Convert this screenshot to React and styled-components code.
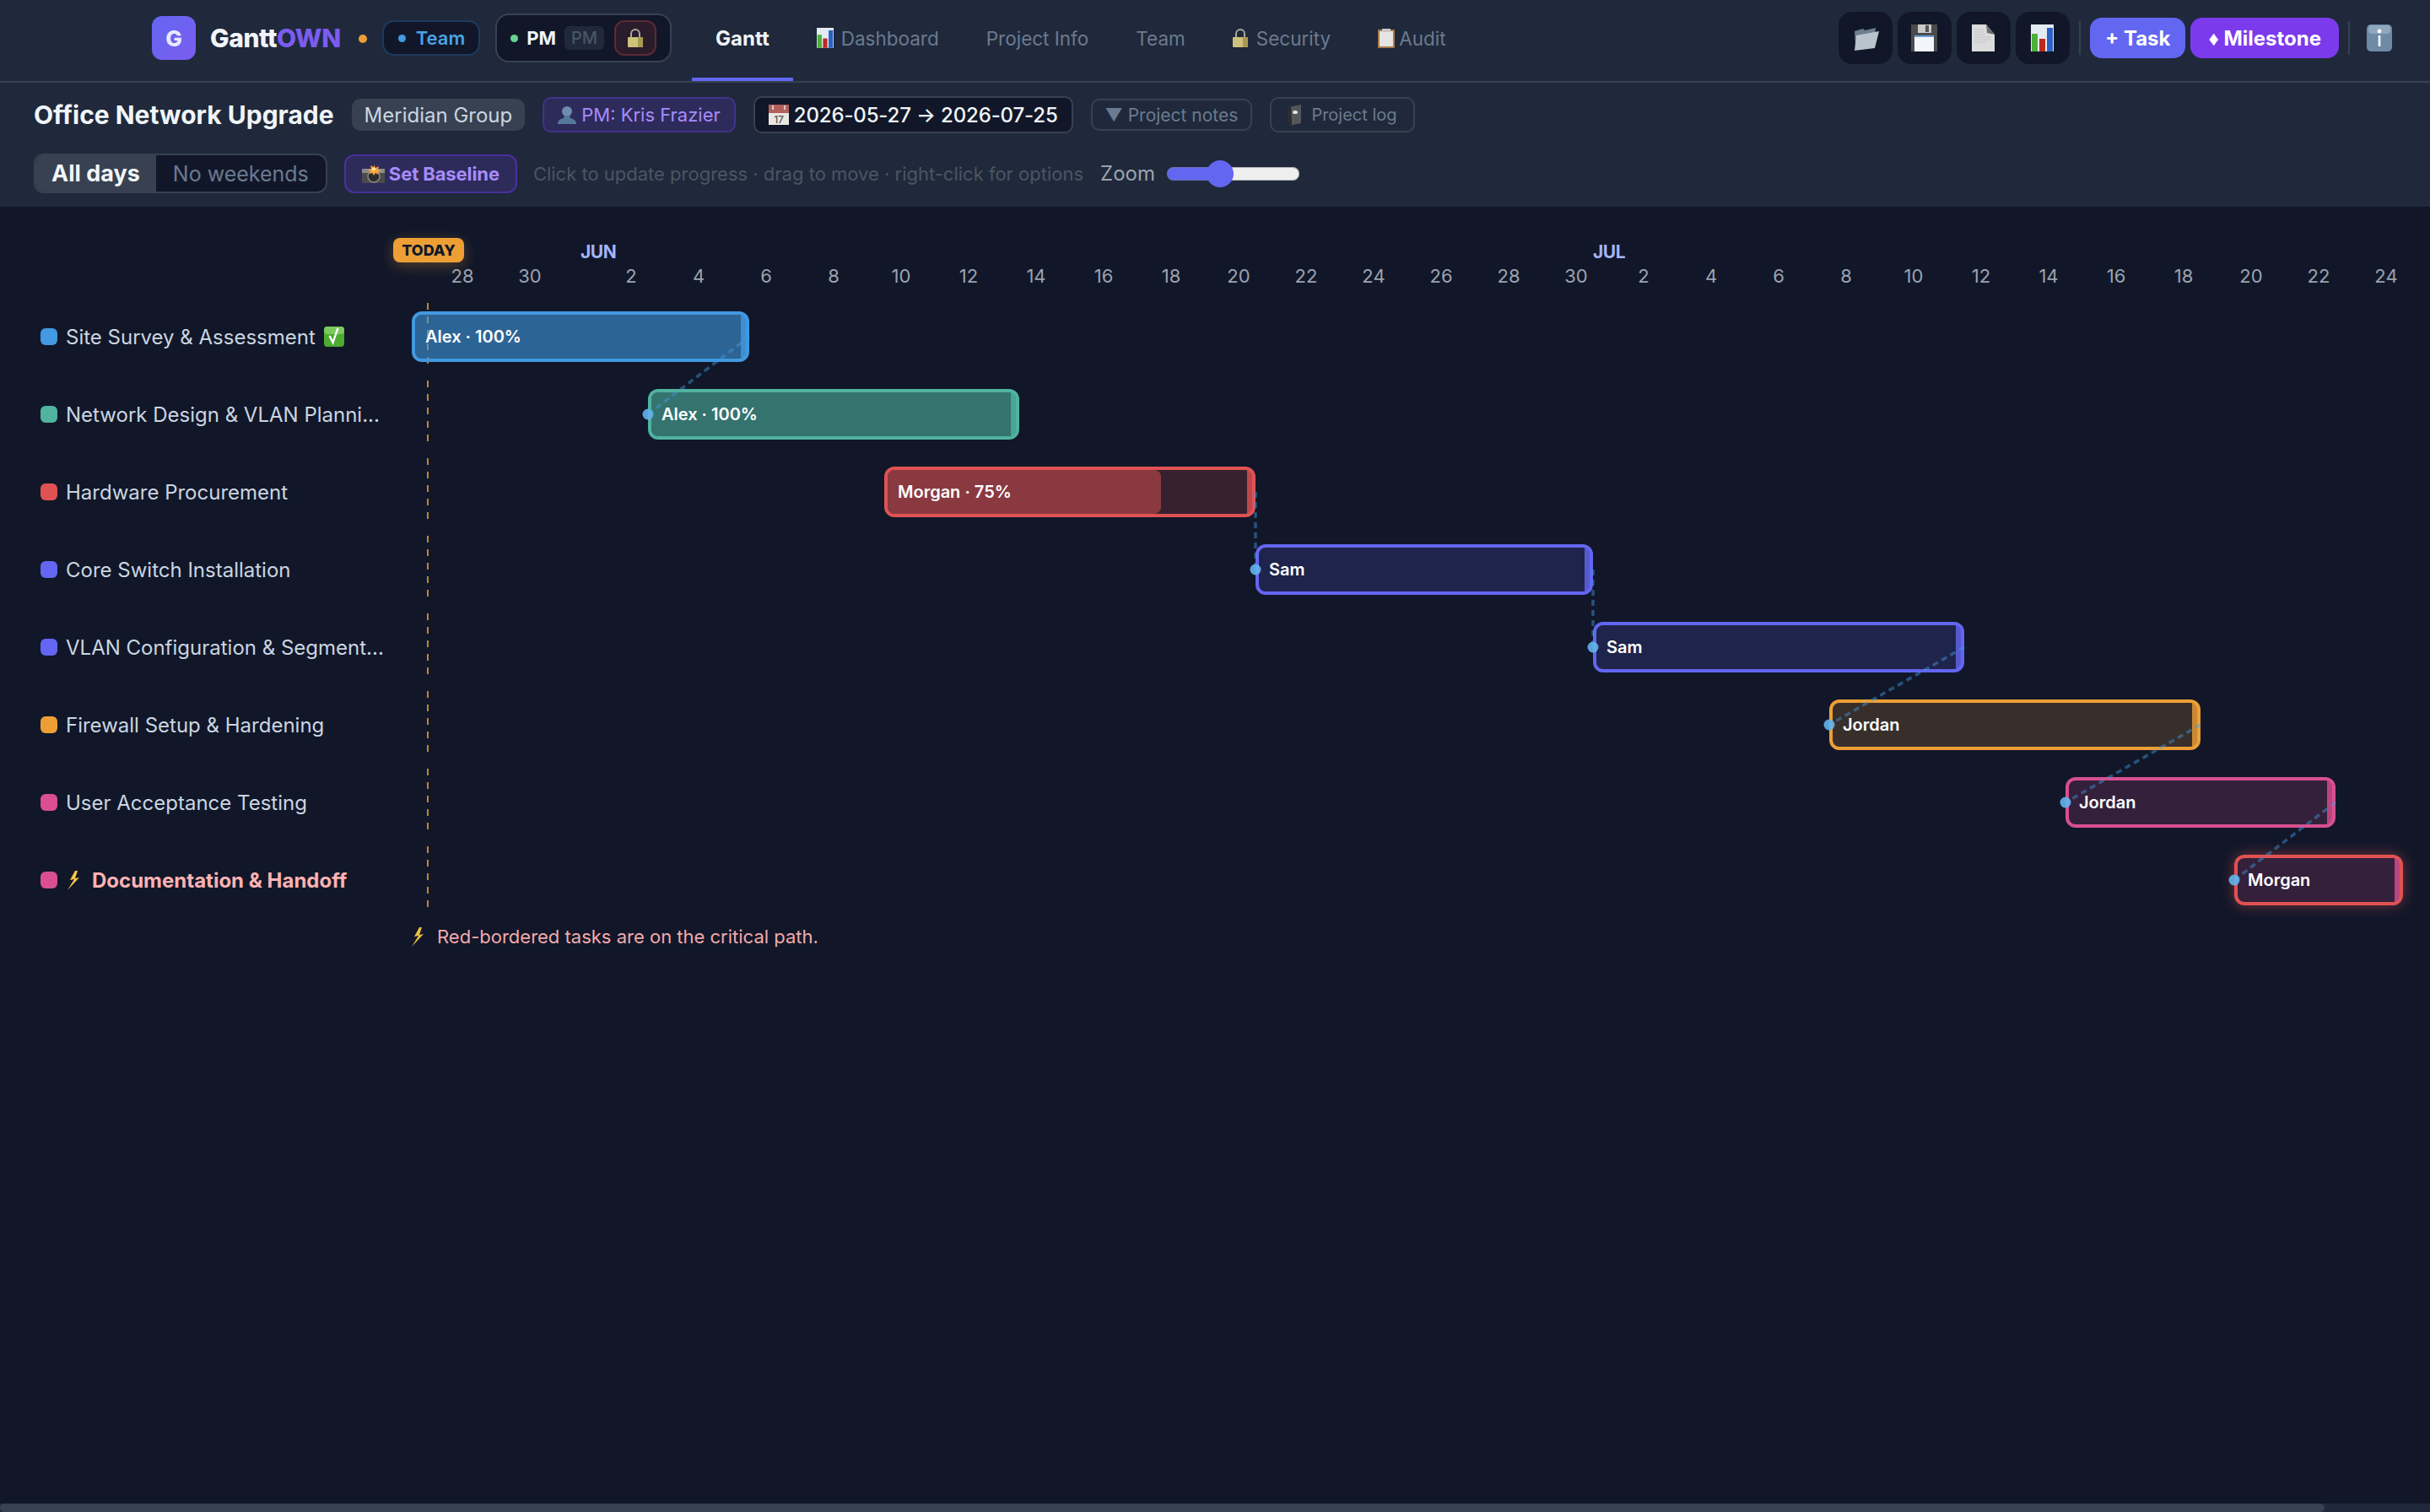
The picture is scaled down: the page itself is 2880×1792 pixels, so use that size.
import React from 'react';
import styled, { createGlobalStyle } from 'styled-components';

const DAY = 40;
const ROW = 92;

const GlobalStyle = createGlobalStyle`
  * { box-sizing: border-box; }
  html, body { margin: 0; height: 100%; background: #111729; }
  body { font-family: Inter, "Noto Sans", sans-serif; color: #f1f5f9; overflow: hidden; }
`;

const Page = styled.div`
  display: flex;
  flex-direction: column;
  height: 100vh;
`;

const TopBar = styled.header`
  display: flex;
  align-items: center;
  height: 98px;
  padding: 0 45px 6px 180px;
  background: #1f293b;
  border-bottom: 2px solid #374151;
`;

const Logo = styled.div`
  display: flex;
  align-items: center;
  justify-content: center;
  width: 52px;
  height: 52px;
  border-radius: 12px;
  background: linear-gradient(135deg, #6366f1, #7c5cf0);
  font-size: 26px;
  font-weight: 800;
  color: #e8eaff;
`;

const Brand = styled.div`
  margin-left: 17px;
  font-size: 30px;
  font-weight: 800;
  letter-spacing: -0.4px;
  color: #f1f5f9;
  span { color: #7c5cf0; }
`;

const SaveDot = styled.span`
  width: 10px;
  height: 10px;
  margin: 2px 18px 0 21px;
  border-radius: 50%;
  background: #ed9f35;
`;

const Dot = styled.span`
  flex: none;
  width: 9px;
  height: 9px;
  border-radius: 50%;
  background: ${p => p.$color};
`;

const TeamPill = styled.div`
  display: flex;
  align-items: center;
  gap: 12px;
  height: 42px;
  padding: 0 16px 0 17px;
  border: 2px solid #1e3a5f;
  border-radius: 14px;
  background: #111729;
  font-size: 22px;
  font-weight: 600;
  color: #4ba3e3;
`;

const RoleBox = styled.div`
  display: flex;
  align-items: center;
  gap: 10px;
  height: 58px;
  margin-left: 18px;
  padding: 0 16px;
  border: 2px solid #374151;
  border-radius: 16px;
  background: #111729;
  font-size: 22px;
  font-weight: 700;
`;

const RoleSwitch = styled.span`
  display: flex;
  align-items: center;
  height: 28px;
  padding: 0 8px;
  border-radius: 6px;
  background: #1f293b;
  font-size: 20px;
  font-weight: 500;
  color: #4b5563;
`;

const LockButton = styled.span`
  display: flex;
  align-items: center;
  justify-content: center;
  width: 50px;
  height: 42px;
  margin-left: 2px;
  border: 2px solid #5c2a36;
  border-radius: 12px;
  background: #2a1c2b;
`;

const Tabs = styled.nav`
  display: flex;
  align-self: stretch;
  margin: 0 0 -6px 24px;
`;

const Tab = styled.div`
  display: flex;
  align-items: center;
  gap: ${p => p.$gap || 0}px;
  height: 96px;
  padding: 0 28px 2px;
  border-bottom: 4px solid ${p => (p.$active ? '#6366f1' : 'transparent')};
  font-size: ${p => (p.$active ? 24 : 22.5)}px;
  font-weight: ${p => (p.$active ? 700 : 400)};
  color: ${p => (p.$active ? '#f1f5f9' : '#6b7a90')};
`;

const Actions = styled.div`
  display: flex;
  align-items: center;
  gap: 6px;
  margin-left: auto;
`;

const IconButton = styled.div`
  display: flex;
  align-items: center;
  justify-content: center;
  width: 64px;
  height: 62px;
  border-radius: 16px;
  background: #111729;
`;

const Divider = styled.span`
  width: 2px;
  height: 40px;
  margin: 0 5px;
  background: #374151;
`;

const ActionButton = styled.div`
  display: flex;
  align-items: center;
  height: 48px;
  padding: 0 ${p => p.$pad}px;
  border-radius: 14px;
  background: ${p => p.$color};
  font-size: 24px;
  font-weight: 700;
  color: #fff;
`;

const InfoSlot = styled.span`
  display: flex;
  margin-left: 9px;
`;

const ProjectBar = styled.section`
  display: flex;
  flex-direction: column;
  gap: 24px;
  height: 147px;
  padding: 16px 40px;
  background: #1f293b;
`;

const BarRow = styled.div`
  display: flex;
  align-items: center;
`;

const ProjectTitle = styled.h1`
  margin: 0 21px 0 0;
  font-size: 30px;
  font-weight: 700;
  color: #f1f5f9;
`;

const Chip = styled.span`
  display: flex;
  align-items: center;
  height: ${p => p.$h || 42}px;
  margin-right: 21px;
  padding: 0 ${p => p.$pad || 16}px;
  border-radius: 10px;
  font-size: ${p => p.$size || 22}px;
  white-space: nowrap;
  gap: ${p => p.$gap || 6}px;
`;

const ClientChip = styled(Chip)`
  background: #374151;
  color: #cbd5e1;
`;

const OwnerChip = styled(Chip)`
  border: 2px solid #43328b;
  background: #2d2b5a;
  color: #a78bfa;
`;

const DateChip = styled(Chip)`
  border: 2px solid #374151;
  background: #111729;
  color: #f1f5f9;
  font-weight: 500;
  letter-spacing: -0.15px;
`;

const GhostChip = styled(Chip)`
  border: 2px solid #374151;
  color: #6b7a90;
`;

const Segments = styled.div`
  display: flex;
  height: 47px;
  border: 2px solid #374151;
  border-radius: 12px;
  overflow: hidden;
  background: #111729;
`;

const Segment = styled.span`
  display: flex;
  align-items: center;
  padding: 0 ${p => (p.$active ? 19 : 20)}px;
  background: ${p => (p.$active ? '#374151' : 'transparent')};
  font-size: ${p => (p.$active ? 27 : 25)}px;
  font-weight: ${p => (p.$active ? 700 : 400)};
  color: ${p => (p.$active ? '#f1f5f9' : '#6b7a90')};
`;

const BaselineButton = styled.div`
  display: flex;
  align-items: center;
  gap: 5px;
  height: 46px;
  margin-left: 20px;
  padding: 0 19px;
  border: 2px solid #4c2f9e;
  border-radius: 12px;
  background: #2d2b5a;
  font-size: 22px;
  font-weight: 700;
  letter-spacing: -0.1px;
  color: #a78bfa;
`;

const Hint = styled.span`
  margin-left: 19px;
  font-size: 22px;
  color: #4b5563;
`;

const ZoomLabel = styled.label`
  margin-left: 20px;
  font-size: 24px;
  color: #9ca3af;
`;

const ZoomRange = styled.input`
  appearance: none;
  width: 157px;
  height: 16px;
  margin: 0 0 0 14px;
  border-radius: 8px;
  background: linear-gradient(to right, #6366f1 41%, #efefef 41%);
  box-shadow: inset 0 0 0 1px rgba(120, 120, 130, 0.5);
  &::-webkit-slider-thumb {
    appearance: none;
    width: 32px;
    height: 32px;
    border-radius: 50%;
    background: #6366f1;
  }
`;

const ChartArea = styled.main`
  flex: 1;
  overflow: hidden;
  background: #111729;
`;

const Chart = styled.div`
  position: relative;
  width: 3010px;
  padding: 40px 0 0 488px;
`;

const ScrollTrack = styled.div`
  flex: none;
  height: 10px;
  background: #1f293b;
`;

const ScrollThumb = styled.div`
  width: 2755px;
  height: 100%;
  border-radius: 5px;
  background: #374151;
`;

const TimeGrid = styled.div`
  display: grid;
  grid-template-columns: repeat(60, ${DAY}px);
  height: ${p => p.$h}px;
  margin-top: ${p => p.$mt || 0}px;
  align-items: center;
`;

const Month = styled.span`
  grid-column: ${p => p.$col + 1} / span 3;
  font-size: 21px;
  font-weight: 700;
  letter-spacing: -0.4px;
  color: #a5b4fc;
`;

const DayCell = styled.span`
  text-align: center;
  font-size: 22px;
  color: #9ca3af;
`;

const TodayBadge = styled.span`
  position: absolute;
  left: 466px;
  top: 37px;
  display: flex;
  align-items: center;
  justify-content: center;
  width: 84px;
  height: 29px;
  border-radius: 8px;
  background: #ed9f35;
  box-shadow: 0 4px 16px rgba(237, 159, 53, 0.3);
  font-size: 18px;
  font-weight: 800;
  color: #111729;
`;

const Rows = styled.div`
  position: relative;
  margin: 15px 0 0 -488px;
`;

const TaskRow = styled.div`
  display: flex;
  height: ${ROW}px;
`;

const TaskLabel = styled.div`
  display: flex;
  align-items: center;
  flex: none;
  width: 488px;
  padding-left: 48px;
  gap: ${p => (p.$critical ? 12 : 10)}px;
  font-size: 24px;
  font-weight: ${p => (p.$critical ? 700 : 400)};
  color: ${p => (p.$critical ? '#feb2b2' : '#cbd5e0')};
  white-space: nowrap;
`;

const Swatch = styled.span`
  flex: none;
  width: 20px;
  height: 20px;
  border-radius: 6px;
  background: ${p => p.$color};
`;

const Lane = styled.div`
  position: relative;
  flex: none;
  width: ${DAY * 60}px;
`;

const TodayLine = styled.span`
  position: absolute;
  left: 18px;
  top: 6px;
  width: 2px;
  height: 72px;
  background: repeating-linear-gradient(to bottom, rgba(237, 159, 53, 0.8) 0 8px, transparent 8px 16px);
`;

const TaskBar = styled.div`
  position: absolute;
  left: ${p => p.$start * DAY}px;
  top: 16px;
  display: flex;
  align-items: center;
  width: ${p => p.$days * DAY}px;
  height: 60px;
  padding-left: 12px;
  border: 4px solid ${p => (p.$critical ? '#e05252' : p.$color)};
  border-radius: 12px;
  background: ${p => p.$color}2e;
  box-shadow: ${p => (p.$critical ? '0 0 16px rgba(224, 82, 82, 0.5)' : 'none')};
  font-size: 20px;
  font-weight: 600;
  color: #fff;
  white-space: nowrap;
`;

const BarFill = styled.span`
  position: absolute;
  left: 0;
  top: 0;
  bottom: 0;
  width: ${p => p.$pct}%;
  border-radius: 8px;
  background: ${p => p.$color}80;
`;

const BarText = styled.span`
  position: relative;
`;

const BarHandle = styled.span`
  position: absolute;
  right: 0;
  top: 0;
  bottom: 0;
  width: 6px;
  border-radius: 0 8px 8px 0;
  background: ${p => p.$color};
  opacity: 0.8;
`;

const Links = styled.svg`
  position: absolute;
  left: 488px;
  top: 0;
  pointer-events: none;
  overflow: visible;
`;

const Note = styled.p`
  display: flex;
  align-items: center;
  gap: 13px;
  margin: 8px 0 0 0;
  font-size: 22px;
  color: #feb2b2;
  opacity: 0.95;
`;

const GlyphSvg = styled.svg`
  flex: none;
  display: block;
`;

const glyphs = {
  folder: [32, 30, (
    <>
      <path d="M3 7l10-3 2 2 13-3-1 9L4 22z" fill="#6d7f8f" />
      <path d="M5 12l27-5-5 20-24 3z" fill="#b9c4cc" />
    </>
  )],
  floppy: [31, 32, (
    <>
      <rect width="31" height="32" fill="#4b4b4d" />
      <rect x="8" width="16" height="10" fill="#c9c9c9" />
      <rect x="17" y="1" width="4" height="8" fill="#555" />
      <rect x="4" y="13" width="23" height="19" fill="#f2f5fa" />
      <rect x="4" y="13" width="23" height="2" fill="#6fa0d8" />
    </>
  )],
  doc: [27, 32, (
    <>
      <path d="M0 0h17l10 12v20H0z" fill="#dcdcdc" />
      <path d="M17 0l10 12-9-2z" fill="#6f6f6f" />
      <path d="M3 6h11M3 9h11M3 12h13M3 15h20M3 18h20M3 21h14" stroke="#c4c4c4" strokeWidth="1" />
    </>
  )],
  chart: [27, 32, (
    <>
      <rect width="27" height="32" fill="#e3ebf3" />
      <rect x="1" y="11" width="7" height="21" fill="#4cb13a" />
      <rect x="10" y="17" width="7" height="15" fill="#bd2a1c" />
      <rect x="19" y="4" width="7" height="28" fill="#2a63c4" />
    </>
  )],
  lock: [18, 22, (
    <>
      <path d="M4 11V6a5 5 0 0 1 10 0v5" fill="none" stroke="#a8a8a0" strokeWidth="2" />
      <rect y="10" width="18" height="12" rx="1" fill="#cfc27c" />
      <rect x="12" y="10" width="6" height="12" fill="#a99a52" />
    </>
  )],
  clipboard: [20, 23, (
    <>
      <rect y="1" width="20" height="22" rx="1" fill="#a9794a" />
      <rect x="2" y="3" width="16" height="18" fill="#e4e4e4" />
      <rect x="5" width="10" height="4" fill="#c9c9c9" />
    </>
  )],
  info: [30, 32, (
    <>
      <rect width="30" height="32" rx="5" fill="#6f8aa5" />
      <rect x="2" y="1" width="26" height="10" rx="4" fill="#8fa8c0" />
      <circle cx="15" cy="8" r="2.4" fill="#fff" />
      <rect x="13.6" y="13" width="2.8" height="13" fill="#eef3f7" />
    </>
  )],
  person: [22, 22, (
    <>
      <circle cx="11" cy="7" r="6" fill="#6f8dab" />
      <path d="M8 12h6l1 3c3 1 7 2 7 7H0c0-5 4-6 7-7z" fill="#55789a" />
    </>
  )],
  calendar: [24, 24, (
    <>
      <rect width="24" height="24" fill="#e9e7e2" />
      <rect width="24" height="10" fill="#b2605c" />
      <path d="M5 1v5M19 1v5" stroke="#e9e7e2" strokeWidth="1.5" />
      <text x="12" y="21.5" fontSize="12" textAnchor="middle" fill="#555" fontFamily="Inter">17</text>
    </>
  )],
  camera: [27, 22, (
    <>
      <rect y="5" width="27" height="17" rx="1" fill="#4a4a4c" />
      <rect y="5" width="27" height="5" fill="#8c8c8c" />
      <circle cx="14" cy="14" r="7" fill="#2c2c2e" stroke="#8a8a8a" strokeWidth="1.5" />
      <path d="M14 0l2 4 4-2-1 4 4 1-4 2 1 3-4-2-2 3-2-3-4 1 2-3-3-2 4-1-1-4 4 2z" fill="#f4a43a" />
      <circle cx="14" cy="5.5" r="2" fill="#ffe9a8" />
    </>
  )],
  notebook: [17, 25, (
    <>
      <path d="M1 3l15-3v22L2 25z" fill="#55565a" />
      <path d="M1 3l3-1 1 22-3 1z" fill="#2a2a2c" />
      <ellipse cx="9" cy="9" rx="3" ry="2" fill="#e6e6e6" />
    </>
  )],
  check: [24, 24, (
    <>
      <rect width="24" height="24" rx="4" fill="#4cab31" />
      <rect width="24" height="9" rx="4" fill="#7cc95c" />
      <path d="M6.5 11l4 8 6-17" fill="none" stroke="#fff" strokeWidth="2.4" />
    </>
  )],
  bolt: [17, 23, <path d="M9 0L3 11l5-1-8 13L14 8 9 9l3-9z" fill="#f6c744" />],
};

const Glyph = ({ name, scale = 1 }) => {
  const [w, h, art] = glyphs[name];
  return (
    <GlyphSvg width={w * scale} height={h * scale} viewBox={`0 0 ${w} ${h}`}>
      {art}
    </GlyphSvg>
  );
};

const tabs = [
  { label: 'Gantt', active: true },
  { label: 'Dashboard', icon: 'chart', scale: 0.74, gap: 9 },
  { label: 'Project Info' },
  { label: 'Team' },
  { label: 'Security', icon: 'lock', gap: 10 },
  { label: 'Audit', icon: 'clipboard', gap: 5 },
];

const tasks = [
  { name: 'Site Survey & Assessment', who: 'Alex · 100%', color: '#4299e1', start: 0, days: 10, pct: 100, done: true },
  { name: 'Network Design & VLAN Planni...', who: 'Alex · 100%', color: '#4fb3a0', start: 7, days: 11, pct: 100, dep: 0 },
  { name: 'Hardware Procurement', who: 'Morgan · 75%', color: '#e05252', start: 14, days: 11, pct: 75 },
  { name: 'Core Switch Installation', who: 'Sam', color: '#6366f1', start: 25, days: 10, pct: 0, dep: 2 },
  { name: 'VLAN Configuration & Segment...', who: 'Sam', color: '#6366f1', start: 35, days: 11, pct: 0, dep: 3 },
  { name: 'Firewall Setup & Hardening', who: 'Jordan', color: '#ed9f35', start: 42, days: 11, pct: 0, dep: 4 },
  { name: 'User Acceptance Testing', who: 'Jordan', color: '#d94f8f', start: 49, days: 8, pct: 0, dep: 5 },
  { name: 'Documentation & Handoff', who: 'Morgan', color: '#d94f8f', start: 54, days: 5, pct: 0, dep: 6, critical: true },
];

// May 27 to Jul 25, only even dates get a label
const days = Array.from({ length: 60 }, (_, i) => new Date(Date.UTC(2026, 4, 27 + i)).getUTCDate());

const App = () => (
  <Page>
    <GlobalStyle />
    <TopBar>
      <Logo>G</Logo>
      <Brand>Gantt<span>OWN</span></Brand>
      <SaveDot />
      <TeamPill><Dot $color="#4299e1" />Team</TeamPill>
      <RoleBox>
        <Dot $color="#68d391" />
        PM
        <RoleSwitch>PM</RoleSwitch>
        <LockButton><Glyph name="lock" /></LockButton>
      </RoleBox>
      <Tabs>
        {tabs.map(t => (
          <Tab key={t.label} $active={t.active} $gap={t.gap}>
            {t.icon && <Glyph name={t.icon} scale={t.scale} />}
            {t.label}
          </Tab>
        ))}
      </Tabs>
      <Actions>
        <IconButton><Glyph name="folder" /></IconButton>
        <IconButton><Glyph name="floppy" /></IconButton>
        <IconButton><Glyph name="doc" /></IconButton>
        <IconButton><Glyph name="chart" /></IconButton>
        <Divider />
        <ActionButton $color="#6366f1" $pad={18}>+ Task</ActionButton>
        <ActionButton $color="#7c3aed" $pad={21}>♦ Milestone</ActionButton>
        <Divider />
        <InfoSlot><Glyph name="info" /></InfoSlot>
      </Actions>
    </TopBar>

    <ProjectBar>
      <BarRow>
        <ProjectTitle>Office Network Upgrade</ProjectTitle>
        <ClientChip $h={38} $size={24} $pad={15}>Meridian Group</ClientChip>
        <OwnerChip><Glyph name="person" />PM: Kris Frazier</OwnerChip>
        <DateChip $h={44} $size={24}><Glyph name="calendar" />2026-05-27 → 2026-07-25</DateChip>
        <GhostChip $h={38} $size={21} $pad={15}>▼ Project notes</GhostChip>
        <GhostChip $size={20} $pad={19} $gap={11}><Glyph name="notebook" />Project log</GhostChip>
      </BarRow>
      <BarRow>
        <Segments>
          <Segment $active>All days</Segment>
          <Segment>No weekends</Segment>
        </Segments>
        <BaselineButton><Glyph name="camera" />Set Baseline</BaselineButton>
        <Hint>Click to update progress · drag to move · right-click for options</Hint>
        <ZoomLabel htmlFor="zoom">Zoom</ZoomLabel>
        <ZoomRange id="zoom" type="range" min="0" max="100" defaultValue="38" />
      </BarRow>
    </ProjectBar>

    <ChartArea>
      <Chart>
        <TodayBadge>TODAY</TodayBadge>
        <TimeGrid $h={26}>
          <Month $col={5}>JUN</Month>
          <Month $col={35}>JUL</Month>
        </TimeGrid>
        <TimeGrid $h={24} $mt={3}>
          {days.map((d, i) => <DayCell key={i}>{d % 2 === 0 ? d : ''}</DayCell>)}
        </TimeGrid>
        <Rows>
          {tasks.map(t => (
            <TaskRow key={t.name}>
              <TaskLabel $critical={t.critical}>
                <Swatch $color={t.color} />
                {t.critical && <Glyph name="bolt" />}
                {t.name}
                {t.done && <Glyph name="check" />}
              </TaskLabel>
              <Lane>
                <TodayLine />
                <TaskBar $start={t.start} $days={t.days} $color={t.color} $critical={t.critical}>
                  {t.pct > 0 && <BarFill $pct={t.pct} $color={t.color} />}
                  <BarText>{t.who}</BarText>
                  <BarHandle $color={t.color} />
                </TaskBar>
              </Lane>
            </TaskRow>
          ))}
          <Links width={DAY * 60} height={ROW * tasks.length}>
            {tasks.map((t, i) => {
              if (t.dep === undefined) return null;
              const from = tasks[t.dep];
              const x1 = (from.start + from.days) * DAY;
              const y1 = ROW * t.dep + ROW / 2;
              const x2 = t.start * DAY;
              const y2 = ROW * i + ROW / 2;
              return (
                <g key={t.name}>
                  <line x1={x1} y1={y1} x2={x2} y2={y2} stroke="#4299e1" strokeOpacity="0.45" strokeWidth="3.5" strokeDasharray="7 5" />
                  <circle cx={x2} cy={y2} r="6.5" fill="#63b3ed" fillOpacity="0.9" />
                </g>
              );
            })}
          </Links>
        </Rows>
        <Note><Glyph name="bolt" />Red-bordered tasks are on the critical path.</Note>
      </Chart>
    </ChartArea>
    <ScrollTrack><ScrollThumb /></ScrollTrack>
  </Page>
);

export default App;
